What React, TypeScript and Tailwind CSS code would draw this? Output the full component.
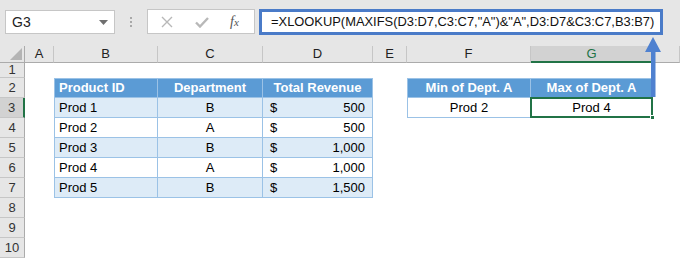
import React from 'react';

const COLS = ['A', 'B', 'C', 'D', 'E', 'F', 'G', 'H'];

const products = [
  { id: 'Prod 1', dept: 'B', rev: '500' },
  { id: 'Prod 2', dept: 'A', rev: '500' },
  { id: 'Prod 3', dept: 'B', rev: '1,000' },
  { id: 'Prod 4', dept: 'A', rev: '1,000' },
  { id: 'Prod 5', dept: 'B', rev: '1,500' },
];

const FORMULA = '=XLOOKUP(MAXIFS(D3:D7,C3:C7,"A")&"A",D3:D7&C3:C7,B3:B7)';

function Cell({ children, className = '' }: { children?: React.ReactNode; className?: string }) {
  return <div className={`min-w-0 overflow-visible whitespace-nowrap ${className}`}>{children}</div>;
}

function renderRow(row: number) {
  const cells: React.ReactNode[] = [];
  const rowHead = row === 3
    ? 'bg-[#d2d2d2] border-r-2 border-r-[#217346]'
    : 'bg-[#e6e6e6] border-r border-r-[#ababab]';
  cells.push(
    <Cell key="h" className={`flex items-center justify-center text-[13px] text-[#333] border-b border-b-[#c6c6c6] ${rowHead}`}>
      {row}
    </Cell>
  );

  const tb = 'border-[#9bc2e6]';
  const hdr = `bg-[#5b9bd5] text-white font-bold border-r border-b ${tb}`;
  const p = products[row - 3];
  const stripe = row % 2 === 1 ? 'bg-[#ddebf7]' : 'bg-white';
  const data = `${stripe} border-r border-b ${tb}`;

  COLS.forEach((c) => {
    let node: React.ReactNode = <Cell key={c} />;
    if (row === 2) {
      if (c === 'B') node = <Cell key={c} className={`${hdr} border-l border-t flex items-center pl-[4px]`}>Product ID</Cell>;
      if (c === 'C') node = <Cell key={c} className={`${hdr} border-t flex items-center justify-center`}>Department</Cell>;
      if (c === 'D') node = <Cell key={c} className={`${hdr} border-t flex items-center justify-center`}>Total Revenue</Cell>;
      if (c === 'F') node = <Cell key={c} className={`${hdr} border-l border-t flex items-center justify-center`}>Min of Dept. A</Cell>;
      if (c === 'G') node = <Cell key={c} className={`${hdr} border-t flex items-center justify-center`}>Max of Dept. A</Cell>;
    } else if (p) {
      if (c === 'B') node = <Cell key={c} className={`${data} border-l flex items-center pl-[4px]`}>{p.id}</Cell>;
      if (c === 'C') node = <Cell key={c} className={`${data} flex items-center justify-center`}>{p.dept}</Cell>;
      if (c === 'D')
        node = (
          <Cell key={c} className={`${data} flex items-center justify-between pl-[7px] pr-[7px]`}>
            <span>$</span>
            <span>{p.rev}</span>
          </Cell>
        );
    }
    if (row === 3) {
      if (c === 'F') node = <Cell key={c} className={`bg-white border-l border-r border-b ${tb} flex items-center justify-center`}>Prod 2</Cell>;
      if (c === 'G')
        node = (
          <Cell key={c} className={`relative bg-white border-r border-b ${tb} flex items-center justify-center`}>
            Prod 4
            <div className="absolute -left-[1px] -top-[1px] -right-[1px] -bottom-[1px] border-2 border-[#217346]" />
            <div className="absolute -right-[3px] -bottom-[3px] w-[5px] h-[5px] bg-[#217346] border border-white" />
          </Cell>
        );
    }
    cells.push(node);
  });
  return cells;
}

export default function App() {
  const rows = Array.from({ length: 9 }, (_, i) => i + 2);

  return (
    <div
      className="relative w-[680px] h-[259px] overflow-hidden bg-white text-[13px] text-black"
      style={{ fontFamily: '"Liberation Sans", Arial, sans-serif' }}
    >
      {/* Formula bar */}
      <div className="h-[46px] bg-[#e6e6e6] flex items-start pt-[9px] pl-[5px]">
        <div className="mt-[1px] w-[110px] h-[24px] bg-white border border-[#c6c6c6] flex items-center justify-between pl-[6px] pr-[6px]">
          <span className="text-[14px] text-[#222]">G3</span>
          <svg width="9" height="5" viewBox="0 0 9 5">
            <path d="M0 0 L9 0 L4.5 5 Z" fill="#6f6f6f" />
          </svg>
        </div>
        <div className="w-[32px] h-[26px] flex flex-col items-center justify-center gap-[2px]">
          <div className="w-[2px] h-[2px] bg-[#a8a8a8]" />
          <div className="w-[2px] h-[2px] bg-[#a8a8a8]" />
          <div className="w-[2px] h-[2px] bg-[#a8a8a8]" />
        </div>
        <div className="w-[108px] h-[25px] bg-white border border-[#c6c6c6] flex items-center pl-[12px]">
          <svg width="12" height="12" viewBox="0 0 12 12" className="ml-[1px]">
            <path d="M1 1 L11 11 M11 1 L1 11" stroke="#b8b8b8" strokeWidth="1.4" fill="none" />
          </svg>
          <svg width="14" height="12" viewBox="0 0 14 12" className="ml-[22px]">
            <path d="M1 6.5 L5 10.5 L13 2" stroke="#b8b8b8" strokeWidth="2.4" fill="none" />
          </svg>
          <span className="ml-[21px] text-[14px] italic text-[#555]" style={{ fontFamily: '"Liberation Serif", serif' }}>
            f<span className="text-[11px]">x</span>
          </span>
        </div>
        <div className="ml-[4px] w-[404px] h-[26px] bg-white border-[3px] border-[#4a7bc8] flex items-center pl-[9px]">
          <span className="text-[12.9px] text-[#111] whitespace-nowrap">{FORMULA}</span>
        </div>
      </div>

      {/* Sheet grid */}
      <div className="grid grid-cols-[25px_29px_104px_105px_110px_34px_124px_122px_1fr] grid-rows-[17px_15px_repeat(9,20px)] text-[13px] text-black">
        <div className="relative bg-[#e6e6e6] border-r border-b border-[#ababab]">
          <svg width="12" height="12" viewBox="0 0 12 12" className="absolute right-[2px] bottom-[2px]">
            <path d="M12 0 L12 12 L0 12 Z" fill="#b4b4b4" />
          </svg>
        </div>
        {COLS.map((c) => (
          <div
            key={c}
            className={
              c === 'G'
                ? 'bg-[#d2d2d2] border-r border-r-[#c6c6c6] border-b-2 border-b-[#217346] text-[#217346] flex items-center justify-center'
                : 'bg-[#e6e6e6] border-r border-r-[#c6c6c6] border-b border-b-[#ababab] text-[#222] flex items-center justify-center'
            }
          >
            {c === 'H' ? '' : c}
          </div>
        ))}
        <div className="bg-[#e6e6e6] border-r border-r-[#ababab] border-b border-b-[#c6c6c6] flex items-center justify-center text-[#333]">
          1
        </div>
        {COLS.map((c) => (
          <div key={c} />
        ))}
        {rows.map((r) => renderRow(r))}
      </div>

      {/* Arrow from G3 to formula */}
      <svg className="absolute left-[642px] top-[35px]" width="22" height="64" viewBox="0 0 22 64">
        <path d="M11 2 L19 17 L3 17 Z" fill="#4f81d0" />
        <rect x="9" y="16" width="4.5" height="46" fill="#4f81d0" />
      </svg>
    </div>
  );
}
